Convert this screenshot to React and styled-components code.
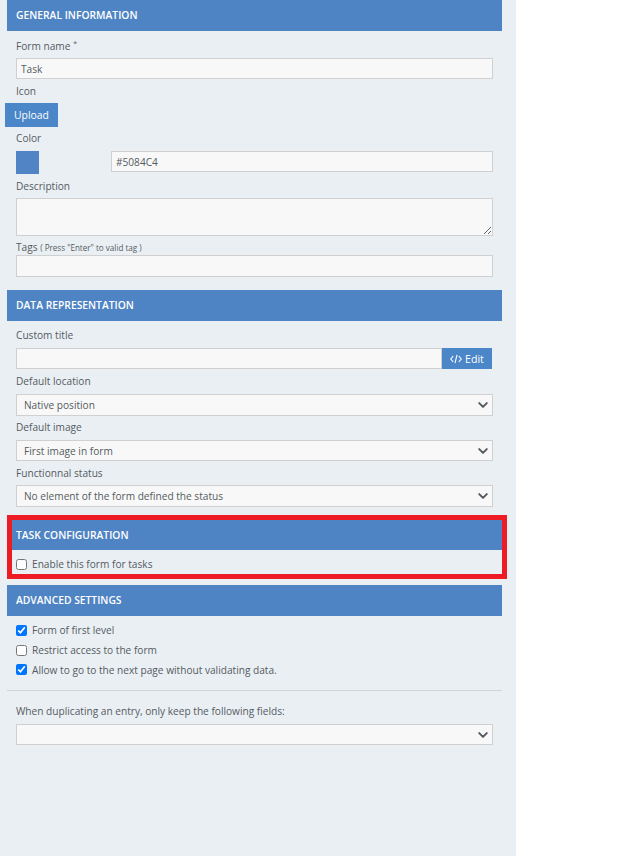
import React from "react";
import styled, { createGlobalStyle } from "styled-components";

const chevron =
  "data:image/svg+xml,%3csvg xmlns='http://www.w3.org/2000/svg' viewBox='0 0 16 16'%3e%3cpath fill='none' stroke='%23555b61' stroke-linecap='round' stroke-linejoin='round' stroke-width='3.2' d='M2 5l6 6 6-6'/%3e%3c/svg%3e";

const GlobalStyle = createGlobalStyle`
  html, body {
    margin: 0;
    padding: 0;
    background: #fff;
  }
  * {
    box-sizing: border-box;
  }
`;

const Panel = styled.div`
  position: relative;
  width: 516px;
  height: 856px;
  padding: 0 14px 0 7px;
  background: #eaeff4;
  font-family: "Open Sans", "Noto Sans", sans-serif;
  font-size: 10.15px;
  color: #555b61;
  overflow: hidden;
`;

const SectionHead = styled.div`
  display: flex;
  align-items: center;
  height: ${(p) => p.$height || 31}px;
  margin-top: ${(p) => p.$top || 0}px;
  padding: 0 0 ${(p) => (p.$height ? 0 : 2)}px 9px;
  background: #4f84c4;
  color: #fff;
  font-size: 10.3px;
  font-weight: 600;
`;

const Body = styled.div`
  display: flex;
  flex-direction: column;
  padding: ${(p) => p.$top || 0}px 9px 0;
`;

const Label = styled.label`
  display: block;
  height: 14px;
  line-height: 14px;
  margin-top: ${(p) => p.$top || 0}px;
  margin-bottom: ${(p) => p.$bottom || 0}px;
`;

const Hint = styled.span`
  font-size: 8.1px;
`;

const Star = styled.sup`
  font-size: 7px;
  line-height: 0;
  margin-left: 3px;
`;

const TextInput = styled.input`
  display: block;
  width: ${(p) => p.$width || "477px"};
  height: ${(p) => p.$height || 21}px;
  margin-top: ${(p) => p.$top || 0}px;
  padding: 0 4px;
  border: 1px solid #d0d0d0;
  background: #f8f8f8;
  color: #555b61;
  font: inherit;
  outline: 0;
  flex: ${(p) => (p.$grow ? 1 : "none")};
`;

const TextArea = styled.textarea`
  display: block;
  width: 477px;
  height: 38px;
  border: 1px solid #d0d0d0;
  background: #f8f8f8;
  outline: 0;
`;

const UploadButton = styled.button`
  display: block;
  width: 53px;
  height: 24px;
  margin: 5px 0 4px -11px;
  padding: 0;
  border: 0;
  background: #4a86c8;
  color: #fff;
  font: inherit;
  font-size: 10.4px;
  font-weight: 500;
`;

const ColorRow = styled.div`
  display: flex;
  align-items: flex-start;
  height: 23px;
  margin-top: 6px;
  gap: 72px;
`;

const Swatch = styled.div`
  width: 23px;
  height: 23px;
  background: #5084c4;
`;

const InputGroup = styled.div`
  display: flex;
  width: 476px;
  height: 21px;
`;

const EditButton = styled.button`
  display: flex;
  align-items: center;
  justify-content: center;
  gap: 3px;
  width: 50px;
  height: 21px;
  padding: 0;
  border: 0;
  background: #4a86c8;
  color: #fff;
  font: inherit;
  font-size: 10.6px;
`;

const Select = styled.select`
  display: block;
  appearance: none;
  width: 477px;
  height: ${(p) => p.$height || 22}px;
  padding: 0 24px 0 7px;
  border: 1px solid #d0d0d0;
  background: #f8f8f8 url("${chevron}") no-repeat right 4px center / 10px 10px;
  color: #555b61;
  font: inherit;
  outline: 0;
`;

const CheckRow = styled.label`
  display: flex;
  align-items: center;
  gap: 5px;
  height: ${(p) => p.$height || 20}px;
`;

const Check = styled.input.attrs({ type: "checkbox", readOnly: true })`
  width: 11px;
  height: 11px;
  margin: 0;
`;

const Divider = styled.hr`
  height: 1px;
  margin: 11px 0 13px;
  border: 0;
  background: #d2d5d8;
`;

const Highlight = styled.div`
  position: absolute;
  left: 7px;
  top: 515px;
  width: 500px;
  height: 64px;
  border: 5px solid #ed1c24;
  pointer-events: none;
`;

function CodeIcon() {
  return (
    <svg width="12" height="10" viewBox="0 0 12 10" fill="none" stroke="#fff" strokeWidth="1.1">
      <path d="M3.2 2 L0.8 5 L3.2 8" />
      <path d="M8.8 2 L11.2 5 L8.8 8" />
      <path d="M7 0.8 L5 9.2" />
    </svg>
  );
}

export default function App() {
  return (
    <Panel>
      <GlobalStyle />
      <SectionHead>GENERAL INFORMATION</SectionHead>
      <Body>
        <Label $top={8} $bottom={5}>
          Form name<Star>*</Star>
        </Label>
        <TextInput defaultValue="Task" />
        <Label $top={5}>Icon</Label>
        <UploadButton>Upload</UploadButton>
        <Label>Color</Label>
        <ColorRow>
          <Swatch />
          <TextInput $width="382px" defaultValue="#5084C4" />
        </ColorRow>
        <Label $top={5} $bottom={5}>Description</Label>
        <TextArea />
        <Label $top={4}>
          Tags <Hint>( Press "Enter" to valid tag )</Hint>
        </Label>
        <TextInput $height={22} $top={1} />
      </Body>

      <SectionHead $top={13}>DATA REPRESENTATION</SectionHead>
      <Body>
        <Label $top={7} $bottom={6}>Custom title</Label>
        <InputGroup>
          <TextInput $width="auto" $grow />
          <EditButton>
            <CodeIcon />
            Edit
          </EditButton>
        </InputGroup>
        <Label $top={5} $bottom={6}>Default location</Label>
        <Select defaultValue="Native position">
          <option>Native position</option>
        </Select>
        <Label $top={4} $bottom={6}>Default image</Label>
        <Select $height={21} defaultValue="First image in form">
          <option>First image in form</option>
        </Select>
        <Label $top={5} $bottom={5}>Functionnal status</Label>
        <Select defaultValue="No element of the form defined the status">
          <option>No element of the form defined the status</option>
        </Select>
      </Body>

      <SectionHead $top={13} $height={30}>TASK CONFIGURATION</SectionHead>
      <Body>
        <CheckRow $height={28}>
          <Check />
          Enable this form for tasks
        </CheckRow>
      </Body>

      <SectionHead $top={7}>ADVANCED SETTINGS</SectionHead>
      <Body $top={4}>
        <CheckRow>
          <Check defaultChecked />
          Form of first level
        </CheckRow>
        <CheckRow>
          <Check />
          Restrict access to the form
        </CheckRow>
        <CheckRow $height={19}>
          <Check defaultChecked />
          Allow to go to the next page without validating data.
        </CheckRow>
      </Body>
      <Divider />
      <Body>
        <Label $bottom={6}>When duplicating an entry, only keep the following fields:</Label>
        <Select $height={21}>
          <option></option>
        </Select>
      </Body>
      <Highlight />
    </Panel>
  );
}
